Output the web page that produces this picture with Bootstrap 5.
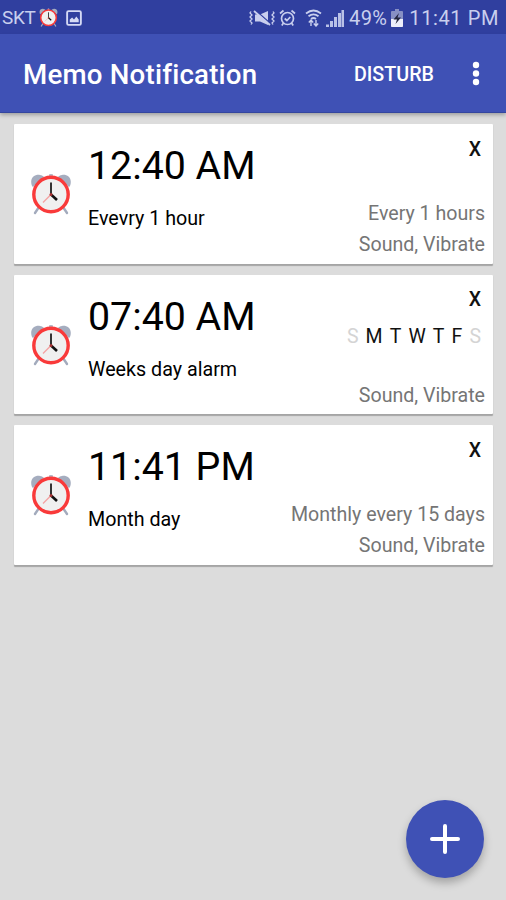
<!DOCTYPE html>
<html lang="en">
<head>
<meta charset="utf-8">
<meta name="viewport" content="width=device-width, initial-scale=1">
<title>Memo Notification</title>
<link href="https://cdn.jsdelivr.net/npm/bootstrap@5.3.0/dist/css/bootstrap.min.css" rel="stylesheet">
<style>
  html, body { height: 100%; }
  body { font-family: Roboto, "Noto Sans", sans-serif; background: #dcdcdc; overflow: hidden; }
  svg { display: block; flex: none; }
  .status-strip { height: 34px; background: #303f9f; color: #c9cfee; font-size: 20px; line-height: 36px; padding: 1px 7px 0 2px; white-space: nowrap; }
  .carrier { font-size: 19px; letter-spacing: -.4px; }
  .status-strip .clock-text { letter-spacing: .6px; margin-left: 6px; }
  .level-text { letter-spacing: .4px; }
  .status-icons { gap: 4.5px; margin-right: 5px; }
  .app-bar { height: 78px; background: #3f51b5; padding: 0 20px 0 23px; box-shadow: 0 1px 0 #34469f, 0 3px 4px rgba(0,0,0,.28); position: relative; }
  .app-title { font-size: 27.7px; font-weight: 500; line-height: 32px; letter-spacing: .2px; padding-top: 4px; }
  .bar-action { font-size: 19.7px; font-weight: 500; line-height: 24px; margin-right: 32px; padding-top: 4px; }
  .memo-list { padding: 12px 13px 0 14px; gap: 11px; }
  .memo { height: 139.5px; border: 0; border-radius: 1px; box-shadow: 0 1.5px 1px rgba(0,0,0,.25); color: #000; }
  .memo-icon { padding: 49px 16px 0 16px; }
  .memo-time { font-size: 39.3px; line-height: 48px; padding-top: 18px; }
  .memo-name { font-size: 19.7px; line-height: 24px; margin-top: 17.2px; }
  .memo-side { padding: 13.6px 8px 3.4px 0; font-size: 19.6px; color: #757575; line-height: 31px; }
  .memo-close { font-size: 19.5px; line-height: 24px; font-weight: 500; color: #111; margin-right: 4px; }
  .week { font-size: 19.5px; line-height: 24px; margin: 12.5px 4px 0 0; gap: 7.1px; color: #111; }
  .week .off { color: #d4d4d4; }
  .fab { right: 22px; bottom: 22px; width: 78px; height: 78px; background: #3f51b5; box-shadow: 0 5px 8px rgba(0,0,0,.26); }
</style>
</head>
<body>
<svg width="0" height="0" class="position-absolute" aria-hidden="true">
  <symbol id="alarm" viewBox="0 0 42 42">
    <path d="M9 34 5 40M33 34l4 6" stroke="#a3abbd" stroke-width="2.4" stroke-linecap="round"/>
    <path d="M2 13C-1 5 5 1 10 2c2 .4 3 1 4 2L3 14ZM40 13c3-8-3-12-8-11-2 .4-3 1-4 2l11 10Z" fill="#a5adbf"/>
    <rect x="19" y="1" width="4" height="4" rx="1" fill="#b5bac7"/>
    <circle cx="21" cy="21.500" r="17.2" fill="#f0f0f0" stroke="#f93a3a" stroke-width="3.4"/>
    <path d="m21 21.500-8 8" stroke="#f5a0a0" stroke-width="1.2"/>
    <path d="M21 22V9.500" stroke="#333" stroke-width="2"/>
    <path d="m21 21.500 6 5.500" stroke="#111" stroke-width="2.600"/>
    <circle cx="21" cy="21.500" r="1.500" fill="#a33"/>
  </symbol>
</svg>

<div class="status-strip d-flex justify-content-between align-items-center">
  <div class="d-flex align-items-center">
    <span class="carrier">SKT</span>
    <svg class="ms-1" width="19" height="19"><use href="#alarm" width="19" height="19"/></svg>
    <svg class="ms-2" width="16" height="16" viewBox="0 0 17 17"><rect x="1.200" y="1.200" width="14.600" height="14.600" rx="1.500" fill="none" stroke="#d5daf5" stroke-width="2"/><path d="M4 13V10l2.500-2 2 2 2.500-3 2.500 3v3Z" fill="#d5daf5"/></svg>
  </div>
  <div class="d-flex align-items-center">
    <div class="status-icons d-flex align-items-center">
    <svg width="26" height="18" viewBox="0 0 26 18" fill="none" stroke="#c9cfee"><path d="M2 2.500 1 4l2 2-2 2 2 2-2 2 2 2-1 1.500M24 2.500l1 1.500-2 2 2 2-2 2 2 2-2 2 1 1.500" stroke-width="1.300"/><path d="M6 5.500h5L19 2v14l-8-3.500H6Z" fill="#c9cfee" stroke="none"/><path d="m6 1 16 14" stroke="#303f9f" stroke-width="1.500"/><path d="m5 2 16 14" stroke-width="1.800"/></svg>
    <svg width="17" height="18" viewBox="0 0 17 18" fill="none" stroke="#c9cfee" stroke-width="1.700"><circle cx="8.500" cy="9.500" r="6"/><path d="M1 4.500 4.500 1.500M16 4.500l-3.500-3M4.500 14 2.800 16.500M12.500 14l1.700 2.500M5.700 9.500l2.200 2 3.400-3.500"/></svg>
    <svg class="ms-1" width="17" height="18" viewBox="0 0 17 18" fill="none" stroke="#c9cfee" stroke-width="1.800"><path d="M1 4.500q7.500-6 15 0M3.500 7.300q5-3.700 10 0M6 10q2.500-2 5 0"/><path d="M6 11v6M3.800 13.500 6 11l2.200 2.500M11 11v6M8.800 14.500 11 17l2.200-2.500" stroke-width="1.400"/></svg>
    <svg width="18" height="18" viewBox="0 0 18 18" fill="#c9cfee"><path d="M0 15.500h3v2.500H0ZM4 12h3v6H4ZM8 8h3v10H8ZM12 4h3v14H12ZM15.500 1H18v17h-2.500Z" opacity=".9"/></svg>
    </div>
    <span class="level-text">49%</span>
    <svg style="margin-left:4px" width="12" height="18" viewBox="0 0 12 18"><path d="M4 0h4v2h3a1 1 0 0 1 1 1v14a1 1 0 0 1-1 1H1a1 1 0 0 1-1-1V3a1 1 0 0 1 1-1h3Z" fill="#8790c4"/><path d="M0 10h12v7a1 1 0 0 1-1 1H1a1 1 0 0 1-1-1Z" fill="#eceefa"/><path d="m8 4-5.500 6.500H6L4.500 15 10 8.500H6.500Z" fill="#23263f"/></svg>
    <span class="clock-text">11:41 PM</span>
  </div>
</div>

<header class="app-bar d-flex align-items-center text-white">
  <h1 class="app-title mb-0 me-auto">Memo Notification</h1>
  <span class="bar-action">DISTURB</span>
  <svg width="20" height="26" viewBox="0 0 20 26" fill="#fff"><circle cx="10" cy="5" r="3.200"/><circle cx="10" cy="13.500" r="3.200"/><circle cx="10" cy="22" r="3.200"/></svg>
</header>

<main class="memo-list d-flex flex-column">
  <article class="memo card flex-row">
    <div class="memo-icon"><svg width="42" height="42"><use href="#alarm"/></svg></div>
    <div class="flex-grow-1"><div class="memo-time">12:40 AM</div><div class="memo-name">Evevry 1 hour</div></div>
    <div class="memo-side d-flex flex-column align-items-end">
      <span class="memo-close">X</span>
      <span class="mt-auto">Every 1 hours</span>
      <span>Sound, Vibrate</span>
    </div>
  </article>
  <article class="memo card flex-row">
    <div class="memo-icon"><svg width="42" height="42"><use href="#alarm"/></svg></div>
    <div class="flex-grow-1"><div class="memo-time">07:40 AM</div><div class="memo-name">Weeks day alarm</div></div>
    <div class="memo-side d-flex flex-column align-items-end">
      <span class="memo-close">X</span>
      <div class="week d-flex"><span class="off">S</span><span>M</span><span>T</span><span>W</span><span>T</span><span>F</span><span class="off">S</span></div>
      <span class="mt-auto">Sound, Vibrate</span>
    </div>
  </article>
  <article class="memo card flex-row">
    <div class="memo-icon"><svg width="42" height="42"><use href="#alarm"/></svg></div>
    <div class="flex-grow-1"><div class="memo-time">11:41 PM</div><div class="memo-name">Month day</div></div>
    <div class="memo-side d-flex flex-column align-items-end">
      <span class="memo-close">X</span>
      <span class="mt-auto">Monthly every 15 days</span>
      <span>Sound, Vibrate</span>
    </div>
  </article>
</main>

<button type="button" class="fab btn rounded-circle border-0 p-0 position-fixed d-flex align-items-center justify-content-center" aria-label="Add">
  <svg width="32" height="32" viewBox="0 0 32 32" stroke="#fff" stroke-width="4" stroke-linecap="round"><path d="M16 3v26M3 16h26"/></svg>
</button>
<script src="https://cdn.jsdelivr.net/npm/bootstrap@5.3.0/dist/js/bootstrap.bundle.min.js"></script>
</body>
</html>
